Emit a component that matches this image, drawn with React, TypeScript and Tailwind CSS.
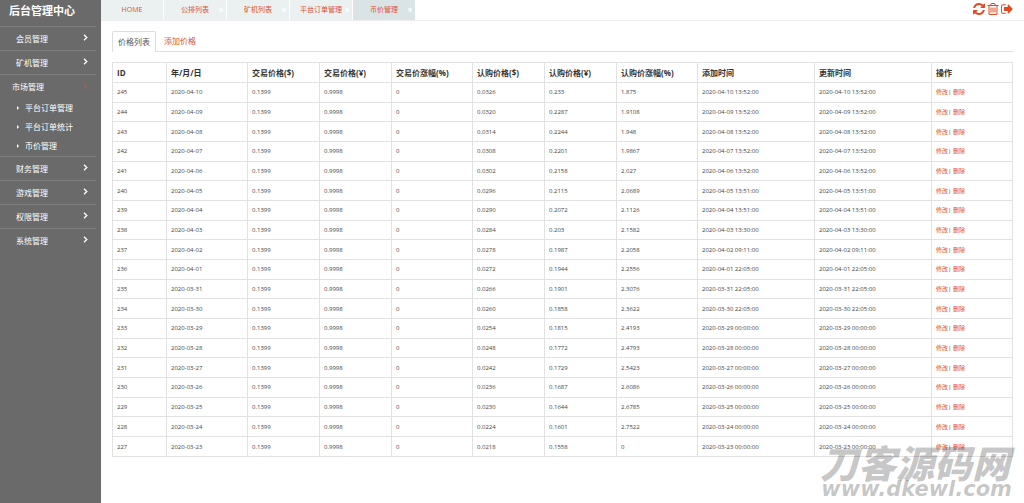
import { ReactNode } from 'react';

interface MenuItem {
  label: string;
  children?: string[];
}

const menu: MenuItem[] = [
  { label: '会员管理' },
  { label: '矿机管理' },
  { label: '市场管理', children: ['平台订单管理', '平台订单统计', '币价管理'] },
  { label: '财务管理' },
  { label: '游戏管理' },
  { label: '权限管理' },
  { label: '系统管理' },
];

const openTabs = ['HOME', '公排列表', '矿机列表', '平台订单管理', '币价管理'];
const activeTab = '币价管理';

const columns = [
  { title: 'ID', width: 'w-[6%]' },
  { title: '年/月/日', width: 'w-[9%]' },
  { title: '交易价格($)', width: 'w-[8%]' },
  { title: '交易价格(¥)', width: 'w-[8%]' },
  { title: '交易价涨幅(%)', width: 'w-[9%]' },
  { title: '认购价格($)', width: 'w-[8%]' },
  { title: '认购价格(¥)', width: 'w-[8%]' },
  { title: '认购价涨幅(%)', width: 'w-[9%]' },
  { title: '添加时间', width: 'w-[13%]' },
  { title: '更新时间', width: 'w-[13%]' },
  { title: '操作', width: 'w-[9%]' },
];

// id, date, buy price ($), buy price (¥), buy rise (%), created / updated at
const prices = [
  ['245', '2020-04-10', '0.0326', '0.233', '1.875', '2020-04-10 13:52:00'],
  ['244', '2020-04-09', '0.0320', '0.2287', '1.9108', '2020-04-09 13:52:00'],
  ['243', '2020-04-08', '0.0314', '0.2244', '1.948', '2020-04-08 13:52:00'],
  ['242', '2020-04-07', '0.0308', '0.2201', '1.9867', '2020-04-07 13:52:00'],
  ['241', '2020-04-06', '0.0302', '0.2158', '2.027', '2020-04-06 13:52:00'],
  ['240', '2020-04-05', '0.0296', '0.2115', '2.0689', '2020-04-05 13:51:00'],
  ['239', '2020-04-04', '0.0290', '0.2072', '2.1126', '2020-04-04 13:51:00'],
  ['238', '2020-04-03', '0.0284', '0.203', '2.1582', '2020-04-03 13:30:00'],
  ['237', '2020-04-02', '0.0278', '0.1987', '2.2058', '2020-04-02 09:11:00'],
  ['236', '2020-04-01', '0.0272', '0.1944', '2.2556', '2020-04-01 22:05:00'],
  ['235', '2020-03-31', '0.0266', '0.1901', '2.3076', '2020-03-31 22:05:00'],
  ['234', '2020-03-30', '0.0260', '0.1858', '2.3622', '2020-03-30 22:05:00'],
  ['233', '2020-03-29', '0.0254', '0.1815', '2.4193', '2020-03-29 00:00:00'],
  ['232', '2020-03-28', '0.0248', '0.1772', '2.4793', '2020-03-28 00:00:00'],
  ['231', '2020-03-27', '0.0242', '0.1729', '2.5423', '2020-03-27 00:00:00'],
  ['230', '2020-03-26', '0.0236', '0.1687', '2.6086', '2020-03-26 00:00:00'],
  ['229', '2020-03-25', '0.0230', '0.1644', '2.6785', '2020-03-25 00:00:00'],
  ['228', '2020-03-24', '0.0224', '0.1601', '2.7522', '2020-03-24 00:00:00'],
  ['227', '2020-03-23', '0.0218', '0.1558', '0', '2020-03-23 00:00:00'],
];

function Chevron({ active = false }: { active?: boolean }) {
  return (
    <svg className={`h-[7px] w-[5px] -translate-y-0.5 ${active ? 'text-[#ee4a28]' : 'text-white'}`} viewBox="0 0 5 7" fill="none" stroke="currentColor">
      <path d="M1 0.8 L3.8 3.5 L1 6.2" strokeWidth={active ? 1 : 1.3} />
    </svg>
  );
}

function Sidebar() {
  return (
    <aside className="w-[101px] shrink-0 bg-[#6a6a6a] pr-[5px] text-white">
      <h1 className="flex h-[26px] items-center pb-1 pl-[9px] text-[11px] font-bold">后台管理中心</h1>
      <nav>
        {menu.map(item => (
          <div key={item.label} className="border-t border-[#808080]">
            <button
              type="button"
              className={`flex h-[23px] w-full items-center justify-between pt-px pr-2 text-[8px] ${item.children ? 'pl-3' : 'pl-4'}`}
            >
              {item.label}
              <Chevron active={!!item.children} />
            </button>
            {item.children && (
              <ul className="pb-px">
                {item.children.map(child => (
                  <li key={child}>
                    <a href="#" className="flex h-[19px] items-center gap-1.5 pl-[17px] text-[8px]">
                      <svg className="h-1 w-[2px]" viewBox="0 0 2 4" fill="currentColor">
                        <path d="M0 0 L2 2 L0 4Z" />
                      </svg>
                      {child}
                    </a>
                  </li>
                ))}
              </ul>
            )}
          </div>
        ))}
      </nav>
    </aside>
  );
}

function IconButton({ label, viewBox, children }: { label: string; viewBox: string; children: ReactNode }) {
  return (
    <button type="button" aria-label={label} className="text-[#e24a1f]">
      <svg className="size-3" viewBox={viewBox} fill="currentColor">
        {children}
      </svg>
    </button>
  );
}

function TopBar() {
  return (
    <header className="flex h-[21px] justify-between border-b border-[#ededed]">
      <div className="flex">
        {openTabs.map(tab => (
          <div
            key={tab}
            className={`relative flex w-[63px] items-center justify-center border-r border-white pt-px text-[7px] text-[#e2502f] ${tab === activeTab ? 'bg-[#dae4e6]' : 'bg-[#ebf0f1]'}`}
          >
            <a href="#">{tab}</a>
            {tab !== 'HOME' && (
              <button type="button" aria-label={`关闭${tab}`} className="absolute top-2 right-[3px] text-white">
                <svg className="size-1" viewBox="0 0 4 4" stroke="currentColor" strokeWidth={1.3}>
                  <path d="M0.4 0.4 L3.6 3.6 M3.6 0.4 L0.4 3.6" />
                </svg>
              </button>
            )}
          </div>
        ))}
      </div>
      <div className="flex items-center gap-0.5 pr-[11px] pb-0.5">
        <IconButton label="刷新" viewBox="0 0 1536 1536">
          <path d="M1511 928q0 5-1 7-64 268-268 434.500t-478 166.500q-146 0-282.500-55t-243.500-157l-129 129q-19 19-45 19t-45-19-19-45v-448q0-26 19-45t45-19h448q26 0 45 19t19 45-19 45l-137 137q71 66 161 102t187 36q134 0 250-65t186-179q11-17 53-117 8-23 30-23h192q13 0 22.500 9.500t9.500 22.500zm25-800v448q0 26-19 45t-45 19h-448q-26 0-45-19t-19-45 19-45l138-138q-148-137-349-137-134 0-250 65t-186 179q-11 17-53 117-8 23-30 23h-199q-13 0-22.500-9.500t-9.500-22.500v-7q65-268 270-434.500t480-166.500q146 0 284 55.500t245 156.500l130-129q19-19 45-19t45 19 19 45z" />
        </IconButton>
        <IconButton label="删除" viewBox="128 128 1536 1536">
          <path d="M704 736v576q0 14-9 23t-23 9h-64q-14 0-23-9t-9-23v-576q0-14 9-23t23-9h64q14 0 23 9t9 23zm256 0v576q0 14-9 23t-23 9h-64q-14 0-23-9t-9-23v-576q0-14 9-23t23-9h64q14 0 23 9t9 23zm256 0v576q0 14-9 23t-23 9h-64q-14 0-23-9t-9-23v-576q0-14 9-23t23-9h64q14 0 23 9t9 23zm128 724v-948h-896v948q0 22 7 40.500t14.500 27 10.500 8.500h832q3 0 10.500-8.500t14.500-27 7-40.500zm-672-1076h448l-48-117q-7-9-17-11h-317q-10 2-17 11zm928 32v64q0 14-9 23t-23 9h-96v948q0 83-47 143.500t-113 60.500h-832q-66 0-113-58.500t-47-141.500v-952h-96q-14 0-23-9t-9-23v-64q0-14 9-23t23-9h309l70-167q15-37 54-63t79-26h320q40 0 79 26t54 63l70 167h309q14 0 23 9t9 23z" />
        </IconButton>
        <IconButton label="退出" viewBox="64 96 1600 1600">
          <path d="M704 1440q0 4 1 20t.5 26.500-3 23.500-10 19.500-20.500 6.500h-320q-119 0-203.500-84.500t-84.500-203.500v-704q0-119 84.500-203.500t203.500-84.500h320q13 0 22.500 9.500t9.500 22.500q0 4 1 20t.5 26.500-3 23.500-10 19.500-20.500 6.500h-320q-66 0-113 47t-47 113v704q0 66 47 113t113 47h312l11.500 1 11.500 3 8 5.500 7 9 2 13.500zm928-544q0 26-19 45l-544 544q-19 19-45 19t-45-19-19-45v-288h-448q-26 0-45-19t-19-45v-384q0-26 19-45t45-19h448v-288q0-26 19-45t45-19 45 19l544 544q19 19 19 45z" />
        </IconButton>
      </div>
    </header>
  );
}

function PriceTable() {
  return (
    <table className="h-[395px] w-full table-fixed border-collapse text-left text-[6px] text-[#444]">
      <thead>
        <tr className="h-5">
          {columns.map(col => (
            <th key={col.title} className={`h-5 border border-[#e2e2e2] px-1 text-[8px] leading-3 font-bold whitespace-nowrap text-[#333] ${col.width}`}>
              {col.title}
            </th>
          ))}
        </tr>
      </thead>
      <tbody>
        {prices.map(([id, date, usd, cny, rise, time]) => (
          <tr key={id}>
            {[id, date, '0.1399', '0.9998', '0', usd, cny, rise, time, time].map((value, i) => (
              <td key={i} className="border border-[#e2e2e2] px-1 leading-3 whitespace-nowrap">
                {value}
              </td>
            ))}
            <td className="border border-[#e2e2e2] px-1 leading-3 whitespace-nowrap">
              <a href="#" className="text-[#e2502f]">修改</a>|{' '}
              <a href="#" className="text-[#e2502f]">删除</a>
            </td>
          </tr>
        ))}
      </tbody>
    </table>
  );
}

export default function App() {
  return (
    <div className="relative flex min-h-screen bg-white font-['Open_Sans','Noto_Sans_CJK_SC',sans-serif]">
      <Sidebar />
      <div className="min-w-0 flex-1">
        <TopBar />
        <main className="px-[11px] pt-2.5">
          <div className="mb-2.5 flex h-[21px] border-b border-[#ddd] text-[8px]">
            <button type="button" className="-mb-px rounded-t-xs border border-b-0 border-[#ddd] bg-white px-[5px] text-[#555]">
              价格列表
            </button>
            <button type="button" className="px-2 text-[#e2502f]">添加价格</button>
          </div>
          <PriceTable />
        </main>
      </div>
      <div className="pointer-events-none absolute right-3 bottom-1 text-right font-bold whitespace-nowrap text-black/23 italic">
        <p className="pr-0.5 text-[38px] leading-8 font-black">刀客源码网</p>
        <p className="font-['DejaVu_Sans',sans-serif] text-[21px] leading-5">www.dkewl.com</p>
      </div>
    </div>
  );
}
